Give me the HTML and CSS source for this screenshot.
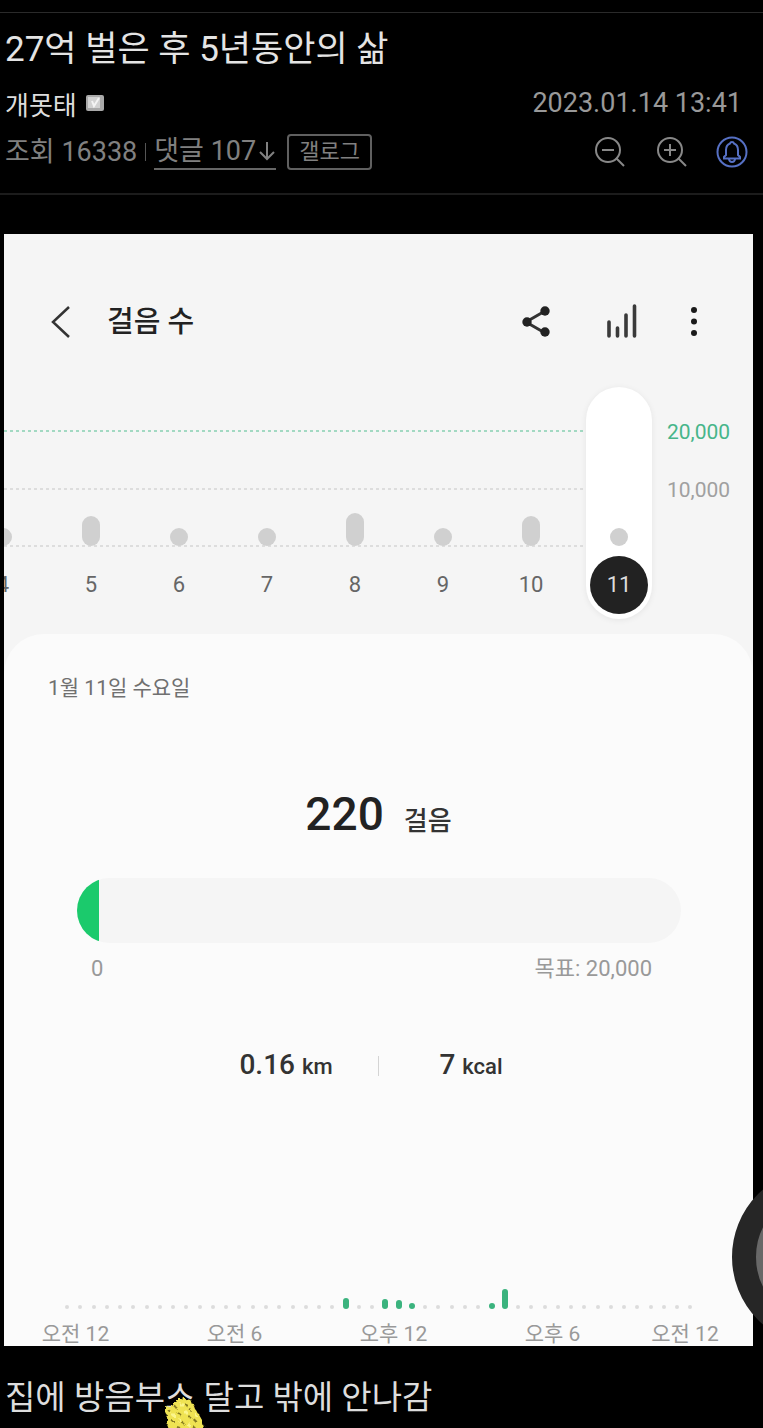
FILE: index.html
```
<!DOCTYPE html>
<html lang="ko">
<head>
    <meta charset="UTF-8">
    <meta name="viewport" content="width=device-width, initial-scale=1">
    <title>27억 벌은 후 5년동안의 삶</title>
    <link rel="stylesheet" href="styles.css">
    <script>
        window.onload = function () {
            var hours = document.getElementById("hours");
            var total = 48;
            // 30분 단위 걸음 막대 높이
            var steps = {21: 11, 24: 10, 25: 9, 26: 6, 32: 6, 33: 20};

            for (var i = 0; i < total; i++) {
                var slot = document.createElement("span");
                var mark = document.createElement("i");
                if (steps[i]) {
                    mark.className = "on";
                    mark.style.height = steps[i] + "px";
                }
                slot.appendChild(mark);
                hours.appendChild(slot);
            }
        }
    </script>
</head>
<body>
<div class="page">
    <header class="post-head">
        <h1>27억 벌은 후 5년동안의 삶</h1>
        <div class="row">
            <div class="writer">
                <span>개못태</span>
                <svg class="badge" viewBox="0 0 18 16" aria-hidden="true">
                    <rect x="0" y="0" width="18" height="16" rx="2" fill="#a9a9a9"/>
                    <rect x="2" y="2" width="12" height="11" fill="#d2d2d2"/>
                    <path d="M6 6l2 5 5-8" fill="none" stroke="#f4f4f4" stroke-width="2"/>
                </svg>
            </div>
            <time datetime="2023-01-14T13:41">2023.01.14 13:41</time>
        </div>
        <div class="row">
            <div class="info">
                <span>조회 16338</span>
                <i class="bar"></i>
                <a class="reply" href="#comment">댓글 107<svg viewBox="0 0 18 24" aria-hidden="true"><path d="M9 3v17M2 13l7 7 7-7"/></svg></a>
                <a class="gallog" href="#gallog">갤로그</a>
            </div>
            <div class="tools">
                <button type="button" aria-label="축소">
                    <svg viewBox="0 0 30 30"><circle cx="13" cy="13" r="12"/><path d="M7 13h12M21 21l8 8"/></svg>
                </button>
                <button type="button" aria-label="확대">
                    <svg viewBox="0 0 30 30"><circle cx="13" cy="13" r="12"/><path d="M7 13h12M13 7v12M21 21l8 8"/></svg>
                </button>
                <button type="button" class="bell" aria-label="알림">
                    <svg viewBox="0 0 32 32"><circle cx="16" cy="16" r="14.500"/><path d="M8 22.500h16v-1.500l-2-2v-5c0-3-1.500-5.500-4-6.500-.5-2-3.500-2-4 0-2.500 1-4 3.500-4 6.500v5l-2 2z"/><path d="M13 23c.5 4 5.500 4 6 0"/></svg>
                </button>
            </div>
        </div>
    </header>

    <main class="card">
        <div class="appbar">
            <button type="button" aria-label="뒤로">
                <svg viewBox="0 0 36 36"><path d="M27 3L11 18l16 15" fill="none" stroke="#333" stroke-width="2.5"/></svg>
            </button>
            <h2>걸음 수</h2>
            <button type="button" aria-label="공유">
                <svg viewBox="0 0 36 36"><path d="M27 7L8 18l19 11" fill="none" stroke="#333" stroke-width="3"/><g fill="#222"><circle cx="27" cy="7" r="4.7"/><circle cx="9" cy="18" r="4.7"/><circle cx="27" cy="28" r="4.7"/></g></svg>
            </button>
            <button type="button" class="stat-btn" aria-label="통계">
                <svg viewBox="0 0 36 36"><path d="M5 18v14M13.500 24v8M22 11v21M30.500 2v30" fill="none" stroke="#3a3a3a" stroke-width="3.600" stroke-linecap="round"/></svg>
            </button>
            <button type="button" class="more" aria-label="더보기">
                <svg viewBox="0 0 36 36"><g fill="#1a1a1a"><circle cx="18" cy="6" r="3"/><circle cx="18" cy="17.500" r="3"/><circle cx="18" cy="29" r="3"/></g></svg>
            </button>
        </div>

        <section class="chart">
            <div class="plot">
                <i class="line goal"></i>
                <i class="line half"></i>
                <i class="line zero"></i>
                <div class="day"><i style="height: 18px"></i><span>4</span></div>
                <div class="day"><i style="height: 30px"></i><span>5</span></div>
                <div class="day"><i style="height: 18px"></i><span>6</span></div>
                <div class="day"><i style="height: 18px"></i><span>7</span></div>
                <div class="day"><i style="height: 33px"></i><span>8</span></div>
                <div class="day"><i style="height: 18px"></i><span>9</span></div>
                <div class="day"><i style="height: 30px"></i><span>10</span></div>
                <div class="day today"><i style="height: 18px"></i><span>11</span></div>
            </div>
            <div class="axis">
                <span class="top">20,000</span>
                <span>10,000</span>
            </div>
        </section>

        <section class="sheet">
            <p class="date">1월 11일 수요일</p>
            <p class="count"><strong>220</strong><span>걸음</span></p>
            <div class="progress"><div style="width: 3.6%"></div></div>
            <div class="range"><span>0</span><span>목표: 20,000</span></div>
            <div class="stats">
                <p>0.16 <small>km</small></p>
                <i></i>
                <p>7 <small>kcal</small></p>
            </div>
            <div id="hours" class="hours"></div>
            <div class="times">
                <span>오전 12</span>
                <span>오전 6</span>
                <span>오후 12</span>
                <span>오후 6</span>
                <span>오전 12</span>
            </div>
        </section>
    </main>

    <p class="caption">집에 방음부<span class="covered">스<svg class="sticker" viewBox="0 0 46 40" aria-hidden="true">
        <defs>
            <filter id="rough">
                <feTurbulence type="fractalNoise" baseFrequency="0.25" numOctaves="2" seed="4"/>
                <feDisplacementMap in="SourceGraphic" scale="6"/>
            </filter>
        </defs>
        <g filter="url(#rough)">
            <path d="M4 14l6 1 5-5 4-4 5 1 6 1 3 8 4 5 4 7 3 12H9L5 30l2-6-3-4z" fill="#efe352"/>
            <path d="M7 18l3 2M13 14l3 2M24 12l3 2M17 21l3 2M27 24l3 2M11 29l3 1M21 30l2 2M33 27l2 3M28 17l2 1M16 35l3 1M32 35l2 1" fill="none" stroke="#857a22" stroke-width="2"/>
            <path d="M10 23h4M19 13h4M22 20h4M17 28h3M26 33h4M34 23h2" fill="none" stroke="#fbf58c" stroke-width="3"/>
        </g>
    </svg></span> 달고 밖에 안나감</p>

    <button type="button" class="float" aria-label="메뉴"></button>
</div>
</body>
</html>
```
FILE: styles.css
```
*{
    margin:0;
    padding:0;
    box-sizing: border-box;
}
body{
    background: #000;
    color: #ddd;
    font-family: Roboto, "Noto Sans CJK KR", sans-serif;
}
i{
    font-style: normal;
}
a{
    color: inherit;
    text-decoration: none;
}
button{
    border: 0;
    background: none;
    cursor: pointer;
}
svg{
    display: block;
}
.page{
    position: relative;
    min-height: 100vh;
    padding-top: 12px;
    overflow: hidden;
}

/* 글 머리 */
.post-head{
    display: flex;
    flex-direction: column;
    gap: 13px;
    padding: 15px 15px 23px 5px;
    border-top: 1px solid #2a2a2a;
    border-bottom: 2px solid #1c1c1c;
}
.post-head h1{
    font-size: 35px;
    line-height: 44px;
    font-weight: 400;
    color: #e4e4e4;
}
.row{
    display: flex;
    justify-content: space-between;
    align-items: center;
    height: 36px;
}
.writer{
    display: flex;
    align-items: center;
    gap: 9px;
    font-size: 26px;
}
.badge{
    width: 18px;
    height: 16px;
}
.row time{
    padding-right: 6px;
    font-size: 27px;
    color: #999;
}
.info{
    display: flex;
    align-items: center;
    font-size: 27px;
    line-height: 34px;
    color: #808080;
}
.bar{
    width: 1px;
    height: 18px;
    margin: 0 8px;
    background: #555;
}
.reply{
    display: flex;
    align-items: center;
    gap: 2px;
    border-bottom: 2px solid #666;
}
.reply svg{
    width: 18px;
    height: 24px;
    fill: none;
    stroke: #808080;
    stroke-width: 2;
}
.gallog{
    margin-left: 11px;
    padding: 0 10px;
    border: 2px solid #606060;
    border-radius: 4px;
    font-size: 22px;
    line-height: 32px;
}
.tools{
    display: flex;
    align-items: center;
    gap: 32px;
}
.tools svg{
    width: 30px;
    height: 30px;
    fill: none;
    stroke: #888;
    stroke-width: 2;
}
.tools .bell{
    margin-left: -3px;
}
.bell svg{
    width: 32px;
    height: 32px;
    stroke: #5670c4;
}

/* 걸음 수 카드 */
.card{
    margin: 39px 10px 0 4px;
    padding-top: 68px;
    overflow: hidden;
    background: #f5f5f5;
    color: #222;
}
.appbar{
    display: flex;
    align-items: center;
    height: 40px;
    padding: 0 41px 0 38px;
}
.appbar svg{
    width: 36px;
    height: 36px;
}
.appbar h2{
    flex: 1;
    padding-left: 29px;
    font-size: 29px;
    line-height: 40px;
    font-weight: 500;
}
.stat-btn{
    margin-left: 50px;
}
.more{
    margin-left: 36px;
}
.chart{
    display: flex;
    margin-top: 45px;
}
.plot{
    position: relative;
    flex: 1;
    min-width: 0;
    display: flex;
    justify-content: flex-end;
    height: 232px;
}
.line{
    position: absolute;
    left: 0;
    right: 44px;
    height: 2px;
    background: repeating-linear-gradient(90deg, #ddd 0, #ddd 3px, transparent 3px, transparent 6px);
}
.goal{
    top: 43px;
    background: repeating-linear-gradient(90deg, #a2d9c2 0, #a2d9c2 3px, transparent 3px, transparent 6px);
}
.half{
    top: 101px;
}
.zero{
    top: 158px;
}
.day{
    position: relative;
    flex: none;
    display: flex;
    flex-direction: column;
    justify-content: flex-end;
    align-items: center;
    gap: 10px;
    width: 66px;
    margin: 0 11px;
    padding-bottom: 5px;
}
.day i{
    width: 18px;
    border-radius: 9px;
    background: #d0d0d0;
}
.day span{
    width: 58px;
    border-radius: 50%;
    font-size: 22px;
    line-height: 58px;
    text-align: center;
    color: #666;
}
.today{
    border-radius: 33px;
    background: #fff;
    box-shadow: 0 1px 6px rgba(0,0,0,.07);
}
.day.today span{
    background: #222;
    color: #ddd;
}
.axis{
    width: 90px;
    padding-top: 30px;
    padding-left: 4px;
    font-size: 21px;
    color: #a0a0a0;
}
.axis span{
    display: block;
    margin-bottom: 28px;
    line-height: 30px;
}
.axis .top{
    color: #47b58a;
}

/* 하루 기록 */
.sheet{
    margin-top: 15px;
    padding-top: 39px;
    border-radius: 40px 40px 0 0;
    background: #fbfbfb;
}
.date{
    padding-left: 44px;
    font-size: 21px;
    line-height: 30px;
    color: #707070;
}
.count{
    display: flex;
    justify-content: center;
    align-items: baseline;
    gap: 20px;
    margin-top: 83px;
    font-size: 26px;
    line-height: 56px;
    font-weight: 500;
    color: #333;
}
.count strong{
    font-size: 46px;
    font-weight: 500;
    color: #222;
}
.progress{
    height: 65px;
    margin: 29px 72px 0 73px;
    border-radius: 33px;
    overflow: hidden;
    background: #f5f5f5;
}
.progress div{
    height: 100%;
    background: #1bca6c;
}
.range{
    display: flex;
    justify-content: space-between;
    margin-top: 11px;
    padding: 0 101px 0 87px;
    font-size: 22px;
    line-height: 30px;
    color: #999;
}
.stats{
    display: flex;
    justify-content: center;
    align-items: center;
    margin-top: 63px;
    font-size: 28px;
    line-height: 36px;
    font-weight: 500;
    color: #333;
}
.stats p{
    width: 184px;
    text-align: center;
}
.stats small{
    font-size: 22px;
}
.stats i{
    width: 1px;
    height: 20px;
    background: #d4d4d4;
}
.hours{
    display: flex;
    justify-content: space-between;
    height: 40px;
    margin: 184px 59px 0 60px;
}
.hours span{
    display: flex;
    justify-content: center;
    align-items: flex-end;
    width: 6px;
}
.hours i{
    width: 4px;
    height: 4px;
    border-radius: 3px;
    background: #dcdcdc;
}
.hours .on{
    width: 6px;
    background: #3bb37e;
}
.times{
    display: grid;
    grid-template-columns: repeat(4, 3fr) 2fr;
    margin: 13px 15px 0 -8px;
    font-size: 21px;
    line-height: 24px;
    text-align: center;
    color: #999;
}

.caption{
    margin-top: 30px;
    padding-left: 5px;
    font-size: 33px;
    line-height: 44px;
}
.covered{
    position: relative;
}
.sticker{
    position: absolute;
    top: 14px;
    left: -4px;
    width: 46px;
    height: 40px;
}
.float{
    position: absolute;
    top: 1168px;
    right: -147px;
    width: 178px;
    height: 178px;
    border: 24px solid #262626;
    border-radius: 50%;
    background: #686868;
}
```
